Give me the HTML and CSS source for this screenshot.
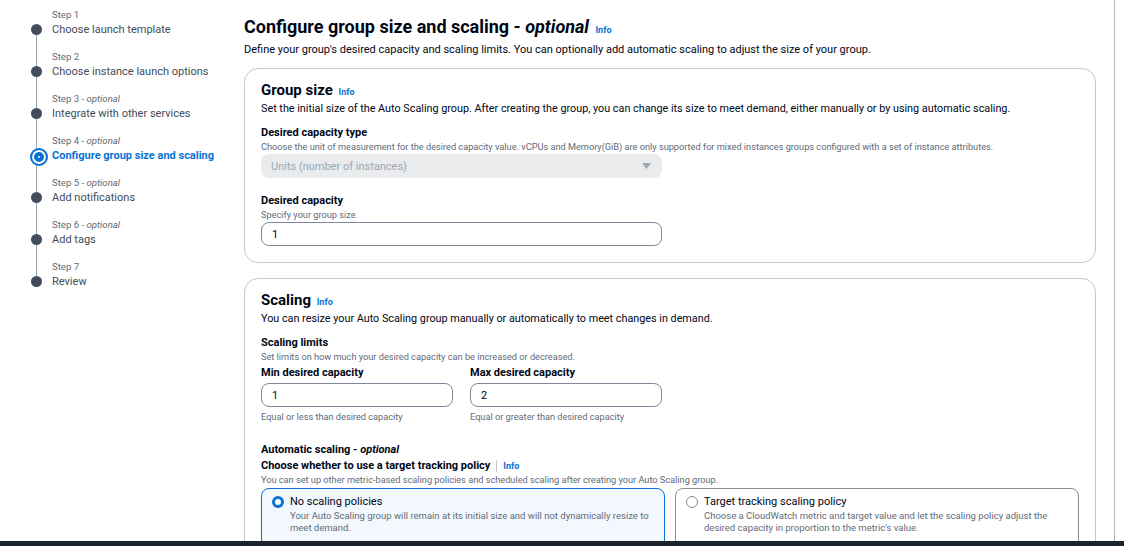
FILE: index.html
```html
<!DOCTYPE html>
<html lang="en">
<head>
<meta charset="utf-8">
<title>Configure group size and scaling</title>
<link rel="stylesheet" href="styles.css">
</head>
<body>
<div class="page">
  <nav class="steps">
    <ol class="step-list">
      <li class="step"><span class="step-label">Step 1</span><span class="step-title">Choose launch template</span></li>
      <li class="step"><span class="step-label">Step 2</span><span class="step-title">Choose instance launch options</span></li>
      <li class="step"><span class="step-label">Step 3 - <i>optional</i></span><span class="step-title">Integrate with other services</span></li>
      <li class="step active"><span class="step-label">Step 4 - <i>optional</i></span><span class="step-title">Configure group size and scaling</span></li>
      <li class="step"><span class="step-label">Step 5 - <i>optional</i></span><span class="step-title">Add notifications</span></li>
      <li class="step"><span class="step-label">Step 6 - <i>optional</i></span><span class="step-title">Add tags</span></li>
      <li class="step last"><span class="step-label">Step 7</span><span class="step-title">Review</span></li>
    </ol>
  </nav>
  <main class="main">
    <h1 class="page-title">Configure group size and scaling - <i>optional</i> <a class="info">Info</a></h1>
    <p class="page-desc">Define your group's desired capacity and scaling limits. You can optionally add automatic scaling to adjust the size of your group.</p>

    <section class="card">
      <h2 class="card-title">Group size <a class="info">Info</a></h2>
      <p class="card-desc">Set the initial size of the Auto Scaling group. After creating the group, you can change its size to meet demand, either manually or by using automatic scaling.</p>

      <div class="field">
        <div class="label">Desired capacity type</div>
        <div class="hint">Choose the unit of measurement for the desired capacity value. vCPUs and Memory(GiB) are only supported for mixed instances groups configured with a set of instance attributes.</div>
        <div class="select">
          <span>Units (number of instances)</span>
          <svg class="caret" width="9" height="6" viewBox="0 0 9 6"><path d="M0 0h9L4.5 6z" fill="#9ba7b6"/></svg>
        </div>
      </div>

      <div class="field">
        <div class="label">Desired capacity</div>
        <div class="hint">Specify your group size.</div>
        <div class="input wide">1</div>
      </div>
    </section>

    <section class="card">
      <h2 class="card-title">Scaling <a class="info">Info</a></h2>
      <p class="card-desc">You can resize your Auto Scaling group manually or automatically to meet changes in demand.</p>

      <div class="field">
        <div class="label">Scaling limits</div>
        <div class="hint">Set limits on how much your desired capacity can be increased or decreased.</div>
        <div class="limits">
          <div class="limit">
            <div class="label">Min desired capacity</div>
            <div class="input">1</div>
            <div class="hint after">Equal or less than desired capacity</div>
          </div>
          <div class="limit">
            <div class="label">Max desired capacity</div>
            <div class="input">2</div>
            <div class="hint after">Equal or greater than desired capacity</div>
          </div>
        </div>
      </div>

      <div class="field auto">
        <div class="label">Automatic scaling - <i>optional</i></div>
        <div class="label sub">Choose whether to use a target tracking policy <span class="sep"></span> <a class="info">Info</a></div>
        <div class="hint">You can set up other metric-based scaling policies and scheduled scaling after creating your Auto Scaling group.</div>
        <div class="tiles">
          <div class="tile selected">
            <span class="radio on"></span>
            <div class="tile-text">
              <div class="tile-title">No scaling policies</div>
              <div class="tile-desc">Your Auto Scaling group will remain at its initial size and will not dynamically resize to meet demand.</div>
            </div>
          </div>
          <div class="tile">
            <span class="radio"></span>
            <div class="tile-text">
              <div class="tile-title">Target tracking scaling policy</div>
              <div class="tile-desc">Choose a CloudWatch metric and target value and let the scaling policy adjust the desired capacity in proportion to the metric's value.</div>
            </div>
          </div>
        </div>
      </div>
    </section>
  </main>
</div>
<footer class="bottom-bar"></footer>
</body>
</html>
```

FILE: styles.css
```css
* { box-sizing: border-box; }
html, body { margin: 0; padding: 0; }
body {
  font-family: Roboto, "Noto Sans", Arial, sans-serif;
  color: #000716;
  background: #fff;
  height: 546px;
  overflow: hidden;
}
.page {
  display: flex;
  width: 1115px;
  min-height: 546px;
  border-right: 1px solid #b6b6bd;
}
.steps {
  width: 244px;
  flex: none;
  padding-top: 8px;
}
.step-list {
  list-style: none;
  margin: 0;
  padding: 0 0 0 52px;
}
.step {
  position: relative;
  display: flex;
  flex-direction: column;
  margin-bottom: 12px;
}
.step-label {
  font-size: 9.6px;
  line-height: 14px;
  color: #5f6b7a;
}
.step-title {
  font-size: 11px;
  line-height: 16px;
  color: #414d5c;
}
.step::before {
  content: "";
  position: absolute;
  left: -21px;
  top: 15.5px;
  width: 11px;
  height: 11px;
  border-radius: 50%;
  background: #414d5c;
  z-index: 1;
}
.step::after {
  content: "";
  position: absolute;
  left: -16px;
  top: 21px;
  width: 1px;
  height: 42px;
  background: #9ba7b6;
}
.step.last::after { display: none; }
.step.active .step-title { color: #0972d3; font-weight: 700; }
.step.active::before {
  left: -22.5px;
  top: 14px;
  width: 14px;
  height: 14px;
  background: #fff;
  border: 2px solid #0972d3;
  box-shadow: inset 0 0 0 2px #fff, inset 0 0 0 6px #0972d3;
}

.main {
  width: 852px;
  flex: none;
  padding-top: 15px;
}
.page-title {
  margin: 0;
  font-size: 18px;
  line-height: 24px;
  font-weight: 700;
}
.page-title i { font-weight: 700; }
.info {
  color: #0972d3;
  font-size: 9px;
  font-weight: 700;
  font-style: normal;
  margin-left: 2px;
}
.page-desc {
  margin: 0 0 10px;
  font-size: 11px;
  line-height: 16px;
  color: #000716;
}
.card {
  border: 1px solid #c6c6cd;
  border-radius: 14px;
  padding: 12px 16px 16px;
  margin-bottom: 15px;
}
.card-title {
  margin: 0;
  font-size: 15px;
  line-height: 19px;
  font-weight: 700;
}
.card-desc {
  margin: 0;
  font-size: 10.8px;
  line-height: 14px;
}
.field { margin-top: 10px; }
.field + .field { margin-top: 16px; }
.label {
  font-size: 11px;
  line-height: 14px;
  font-weight: 700;
}
.label i { font-weight: 700; }
.hint {
  font-size: 9.2px;
  line-height: 13px;
  color: #5f6b7a;
}
.hint.after { margin-top: 3px; }
.select {
  margin-top: 1px;
  width: 401px;
  height: 24px;
  border-radius: 8px;
  background: #e9ebed;
  display: flex;
  align-items: center;
  justify-content: space-between;
  padding: 0 11px 0 10px;
  font-size: 11px;
  color: #9ba7b6;
}
.input {
  margin-top: 1px;
  height: 24px;
  border: 1px solid #7d8998;
  border-radius: 8px;
  padding: 0 10px;
  display: flex;
  align-items: center;
  font-size: 11px;
}
.input.wide { width: 401px; }
.limits {
  display: grid;
  grid-template-columns: 192px 192px;
  column-gap: 17px;
  margin-top: 3px;
}
.limit .input { margin-top: 3px; }
.field.auto { margin-top: 20px; }
.label.sub { margin-top: 2px; display: flex; align-items: center; }
.sep {
  display: inline-block;
  width: 1px;
  height: 12px;
  background: #c6c6cd;
  margin: 0 6px 0 6px;
}
.label.sub .info { margin-left: 0; }
.tiles {
  display: grid;
  grid-template-columns: 1fr 1fr;
  column-gap: 10px;
  margin-top: 2px;
}
.tile {
  border: 1px solid #8c8c94;
  border-radius: 8px;
  display: flex;
  align-items: flex-start;
  padding: 5px 12px 8px 10px;
  min-height: 60px;
}
.tile.selected {
  border-color: #0972d3;
  background: #f2f8fd;
}
.radio {
  flex: none;
  width: 12px;
  height: 12px;
  border-radius: 50%;
  border: 1.5px solid #7d8998;
  background: #fff;
  margin-top: 2px;
  margin-right: 6px;
}
.radio.on {
  border: 3.5px solid #0972d3;
}
.tile-title {
  font-size: 11px;
  line-height: 16px;
}
.tile-desc {
  font-size: 9.5px;
  line-height: 12px;
  color: #5f6b7a;
}
.bottom-bar {
  position: fixed;
  left: 0;
  right: 0;
  bottom: 0;
  height: 5px;
  background: #1b232d;
}
```
